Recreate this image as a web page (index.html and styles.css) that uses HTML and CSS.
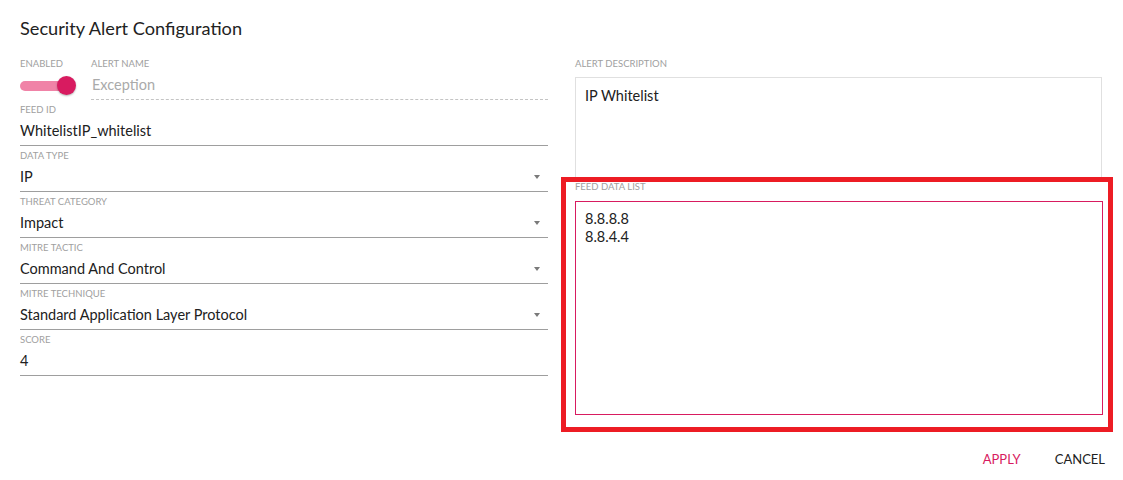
FILE: index.html
```html
<!DOCTYPE html>
<html>
<head>
<meta charset="utf-8">
<link rel="stylesheet" href="styles.css">
</head>
<body>
<div class="dialog">
  <h1 class="title">Security Alert Configuration</h1>
  <div class="columns">
    <div class="col left">
      <div class="top-row">
        <div class="enabled">
          <div class="label">Enabled</div>
          <div class="toggle-wrap">
            <div class="toggle"><span class="knob"></span></div>
          </div>
        </div>
        <div class="field name-field">
          <div class="label">Alert Name</div>
          <div class="value placeholder dashed">Exception</div>
        </div>
      </div>
      <div class="field">
        <div class="label">Feed ID</div>
        <div class="value">WhitelistIP_whitelist</div>
      </div>
      <div class="field">
        <div class="label">Data Type</div>
        <div class="value select"><span>IP</span><span class="arrow"></span></div>
      </div>
      <div class="field">
        <div class="label">Threat Category</div>
        <div class="value select"><span>Impact</span><span class="arrow"></span></div>
      </div>
      <div class="field">
        <div class="label">Mitre Tactic</div>
        <div class="value select"><span>Command And Control</span><span class="arrow"></span></div>
      </div>
      <div class="field">
        <div class="label">Mitre Technique</div>
        <div class="value select"><span>Standard Application Layer Protocol</span><span class="arrow"></span></div>
      </div>
      <div class="field">
        <div class="label">Score</div>
        <div class="value">4</div>
      </div>
    </div>
    <div class="col right">
      <div class="label">Alert Description</div>
      <div class="textbox desc">IP Whitelist</div>
      <div class="label feed-label">Feed Data List</div>
      <div class="textbox feed">8.8.8.8<br>8.8.4.4</div>
      <div class="highlight"></div>
    </div>
  </div>
  <div class="actions">
    <button class="btn apply">Apply</button>
    <button class="btn cancel">Cancel</button>
  </div>
</div>
</body>
</html>
```

FILE: styles.css
```css
* { box-sizing: border-box; }
html, body { margin: 0; padding: 0; background: #fff; }
body {
  font-family: Lato, "Open Sans", sans-serif;
  color: #212121;
  width: 1123px;
  height: 480px;
  overflow: hidden;
}
.dialog { padding: 16px 0 0 20px; }
.title {
  margin: 0 0 18px 0;
  font-size: 18.2px;
  font-weight: 400;
  line-height: 24px;
  color: #222;
}
.columns { display: flex; gap: 27px; }
.col { position: relative; }
.left { width: 528px; }
.right { width: 527px; }
.label {
  font-size: 9.5px;
  line-height: 12px;
  height: 12px;
  text-transform: uppercase;
  color: #a0a0a0;
  white-space: nowrap;
}
.top-row { display: flex; }
.enabled { width: 71px; }
.toggle-wrap { height: 30px; display: flex; align-items: center; padding-top: 1px; }
.toggle {
  position: relative;
  width: 52px;
  height: 10px;
  border-radius: 5px;
  background: #f083a7;
}
.knob {
  position: absolute;
  right: -4px;
  top: -5px;
  width: 19px;
  height: 19px;
  border-radius: 50%;
  background: #d81b60;
  box-shadow: 0 1px 2px rgba(0,0,0,0.3);
}
.field { margin-bottom: 4px; }
.name-field { flex: 1; }
.value {
  font-size: 14.5px;
  line-height: 29px;
  height: 30px;
  border-bottom: 1px solid #9e9e9e;
  color: #212121;
}
.placeholder { color: #aaa; padding-left: 1px; }
.dashed { border-bottom: 1px dashed #c4c4c4; }
.select {
  display: flex;
  justify-content: space-between;
  align-items: center;
}
.arrow {
  width: 0;
  height: 0;
  margin-right: 8px;
  border-left: 3.5px solid transparent;
  border-right: 3.5px solid transparent;
  border-top: 4.5px solid #7a7a7a;
}
.textbox {
  font-size: 14.5px;
  color: #212121;
  padding: 9px;
}
.desc {
  height: 102px;
  margin-top: 7px;
  border: 1px solid #e0e0e0;
  line-height: 20px;
  padding-top: 8px;
}
.feed-label { margin-top: 2px; }
.feed {
  margin-top: 8px;
  height: 214px;
  width: 528px;
  border: 1px solid #d81b60;
  line-height: 18px;
  padding-top: 8px;
}
.highlight {
  position: absolute;
  left: -14px;
  top: 119px;
  width: 552px;
  height: 255px;
  border: 5px solid #ed1c24;
  pointer-events: none;
}
.actions {
  display: flex;
  justify-content: flex-end;
  padding-right: 10px;
  margin-top: 26px;
}
.btn {
  font-family: Lato, "Open Sans", sans-serif;
  background: none;
  border: 0;
  font-size: 13px;
  text-transform: uppercase;
  padding: 0 8px;
  height: 36px;
  line-height: 36px;
  cursor: pointer;
}
.apply { color: #d81b60; margin-right: 18px; }
.cancel { color: #212121; }
```
